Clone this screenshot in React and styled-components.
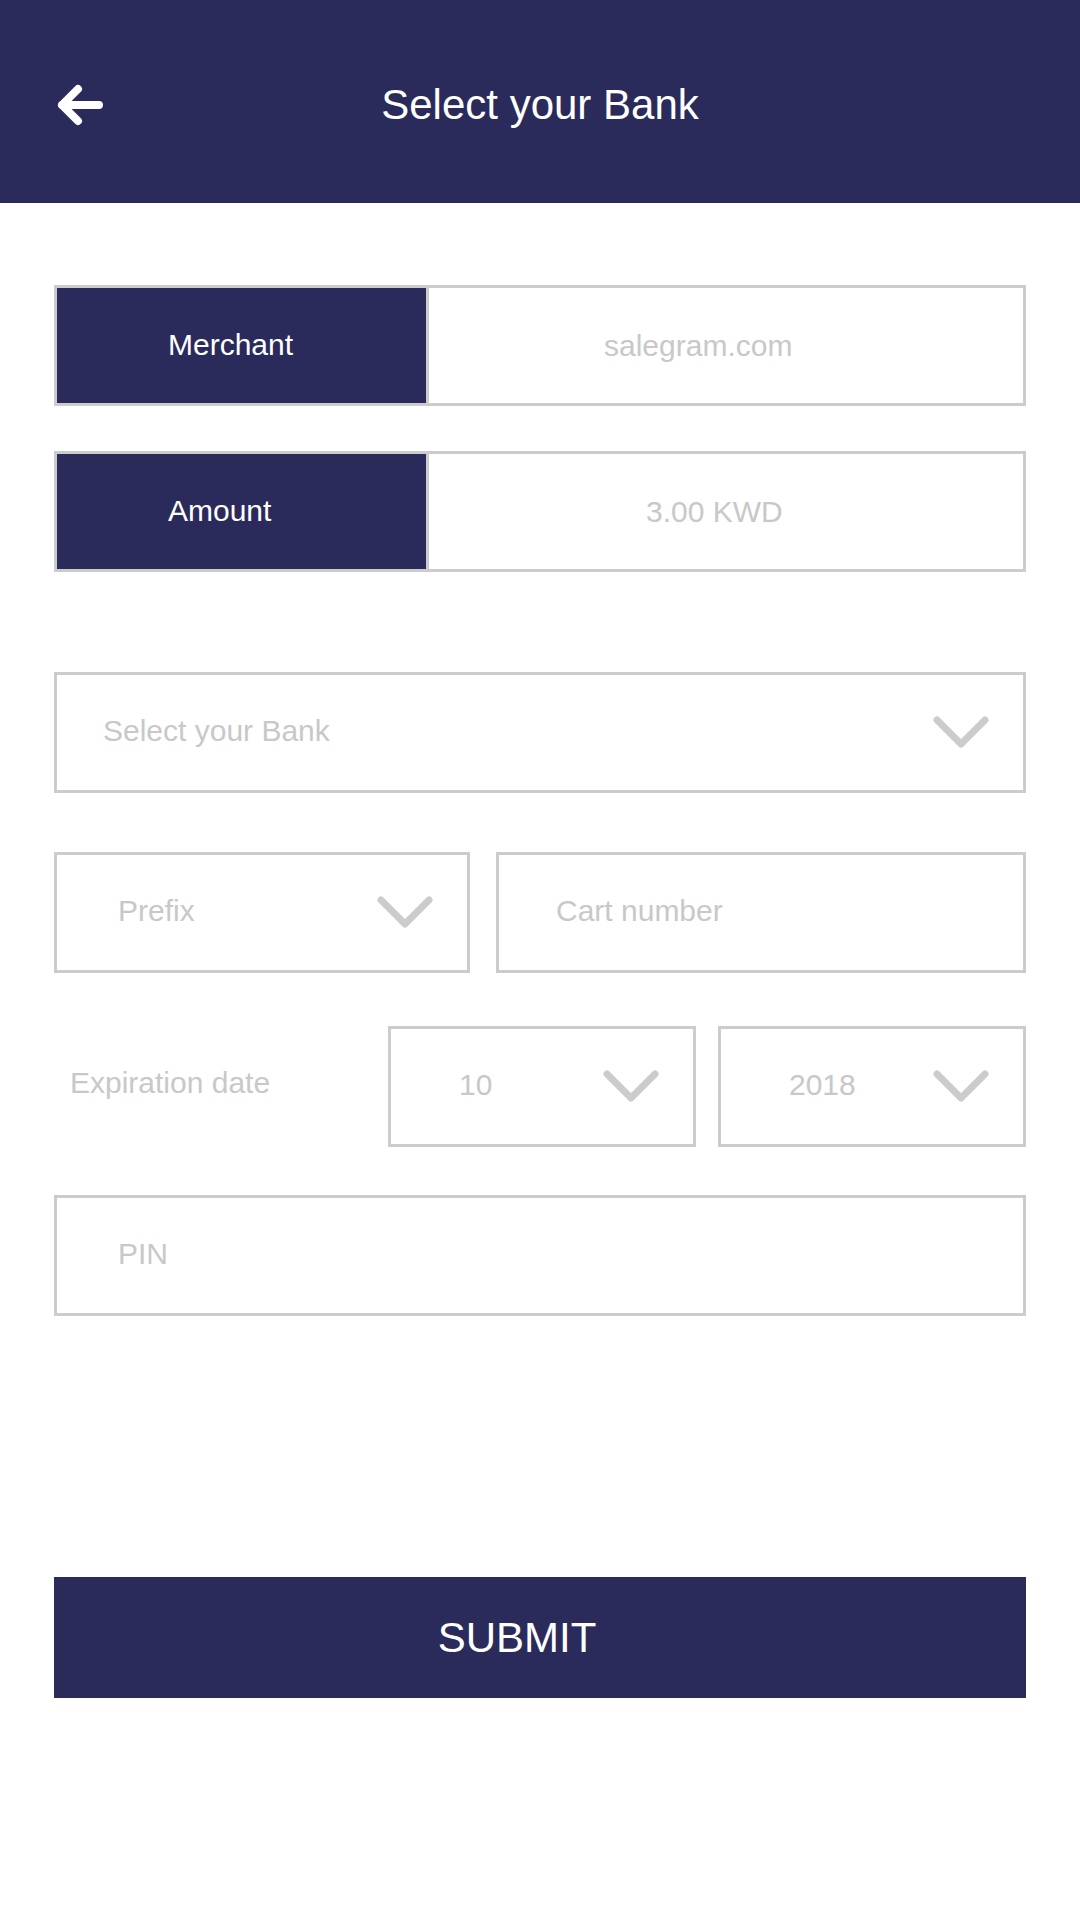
import React from 'react'
import styled, { createGlobalStyle } from 'styled-components'

const navy = '#2b2b5b'
const line = '#cccccc'
const hint = '#c8c8c8'

const ArrowBack = () => (
  <svg width="52" height="44" viewBox="0 0 52 44">
    <path d="M45 22H8M24 6L8 22L24 38" fill="none" stroke="#fff" strokeWidth="8" strokeLinecap="round" strokeLinejoin="round" />
  </svg>
)

const Chevron = () => (
  <svg width="56" height="32" viewBox="0 0 56 32">
    <path d="M4 4L28 28L52 4" fill="none" stroke={line} strokeWidth="7" strokeLinecap="round" strokeLinejoin="round" />
  </svg>
)

const App = () => {
  return (
    <Page>
      <GlobalStyle />
      <Header>
        <BackButton><ArrowBack /></BackButton>
        <Title>Select your Bank</Title>
        <span />
      </Header>
      <Form>
        <InfoRow $top={82}>
          <InfoLabel>Merchant</InfoLabel>
          <InfoValue $indent={177}>salegram.com</InfoValue>
        </InfoRow>
        <InfoRow $top={45}>
          <InfoLabel>Amount</InfoLabel>
          <InfoValue $indent={219}>3.00 KWD</InfoValue>
        </InfoRow>

        <Select $top={100} $indent={46}>
          <span>Select your Bank</span>
          <Chevron />
        </Select>

        <Row $top={59}>
          <Select $indent={61} $width={416}>
            <span>Prefix</span>
            <Chevron />
          </Select>
          <Field $grow $indent={57}>Cart number</Field>
        </Row>

        <Row $top={53} $gap={22}>
          <ExpiryLabel>Expiration date</ExpiryLabel>
          <Select $grow $indent={68}>
            <span>10</span>
            <Chevron />
          </Select>
          <Select $grow $indent={68}>
            <span>2018</span>
            <Chevron />
          </Select>
        </Row>

        <Field $top={48} $indent={61}>PIN</Field>

        <SubmitButton>SUBMIT</SubmitButton>
      </Form>
    </Page>
  )
}

const GlobalStyle = createGlobalStyle`
  html, body {
    margin: 0;
    padding: 0;
    background: #fff;
  }
  body {
    font-family: 'Liberation Sans', Arial, sans-serif;
  }
`

const Page = styled.div`
  width: 1080px;
  min-height: 1920px;
  background: #fff;
`

const Header = styled.header`
  height: 203px;
  box-sizing: border-box;
  padding: 6px 54px 0;
  background: ${navy};
  display: grid;
  grid-template-columns: 1fr auto 1fr;
  align-items: center;
`

const BackButton = styled.button`
  border: none;
  background: transparent;
  padding: 0;
  width: 52px;
  height: 44px;
  display: flex;
  cursor: pointer;
`

const Title = styled.h1`
  margin: 0;
  font-size: 42px;
  font-weight: normal;
  color: #fff;
  line-height: 1;
`

const Form = styled.div`
  padding: 0 54px;
  display: flex;
  flex-direction: column;
`

const InfoRow = styled.div`
  height: 121px;
  box-sizing: border-box;
  border: 3px solid ${line};
  margin-top: ${props => props.$top || 0}px;
  display: flex;
`

const InfoLabel = styled.div`
  width: 372px;
  box-sizing: border-box;
  padding: 0 0 2px 111px;
  background: ${navy};
  border-right: 3px solid ${line};
  color: #fff;
  font-size: 30px;
  display: flex;
  align-items: center;
`

const InfoValue = styled.div`
  flex: 1;
  padding-left: ${props => props.$indent - 2}px;
  color: ${hint};
  font-size: 30px;
  display: flex;
  align-items: center;
`

const Box = styled.div`
  height: 121px;
  box-sizing: border-box;
  border: 3px solid ${line};
  margin-top: ${props => props.$top || 0}px;
  padding-left: ${props => props.$indent}px;
  padding-bottom: 4px;
  color: ${hint};
  font-size: 30px;
  display: flex;
  align-items: center;
  flex: ${props => props.$grow ? '1 1 0' : 'none'};
  ${props => props.$width && `width: ${props.$width}px;`}
`

const Select = styled(Box)`
  justify-content: space-between;
  padding-right: 34px;
  svg {
    margin-top: 2px;
  }
`

const Field = styled(Box)``

const Row = styled.div`
  display: flex;
  gap: ${props => props.$gap || 26}px;
  margin-top: ${props => props.$top || 0}px;
`

const ExpiryLabel = styled.div`
  width: 312px;
  padding: 0 0 8px 16px;
  box-sizing: border-box;
  color: ${hint};
  font-size: 30px;
  display: flex;
  align-items: center;
`

const SubmitButton = styled.button`
  margin-top: 261px;
  height: 121px;
  border: none;
  background: ${navy};
  color: #fff;
  font-family: 'Liberation Sans', Arial, sans-serif;
  font-size: 42px;
  padding: 0 46px 0 0;
  cursor: pointer;
`

export default App
